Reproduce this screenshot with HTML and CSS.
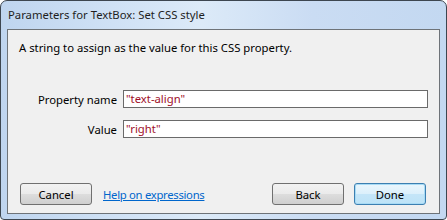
FILE: index.html
```html
<!DOCTYPE html>
<html>
<head>
<meta charset="utf-8">
<link rel="stylesheet" href="styles.css">
</head>
<body>
<div class="window">
  <div class="titlebar">Parameters for TextBox: Set CSS style</div>
  <div class="client">
    <p class="desc">A string to assign as the value for this CSS property.</p>
    <div class="form">
      <label class="label">Property name</label>
      <div class="input">"text-align"</div>
      <label class="label">Value</label>
      <div class="input">"right"</div>
    </div>
    <div class="buttons">
      <button class="btn">Cancel</button>
      <a class="link" href="#">Help on expressions</a>
      <span class="spacer"></span>
      <button class="btn">Back</button>
      <button class="btn btn-default">Done</button>
    </div>
  </div>
</div>
</body>
</html>
```

FILE: styles.css
```css
html, body {
  margin: 0;
  padding: 0;
  background: #ffffff;
}
.window {
  width: 447px;
  height: 220px;
  box-sizing: border-box;
  border: 1px solid #3d4650;
  border-radius: 7px 7px 4px 4px;
  background: linear-gradient(90deg, #bfd5ef 0%, #cfe1f5 25%, #dceaf8 45%, #cadcf3 70%, #c3d8f1 100%);
  display: flex;
  flex-direction: column;
  font-family: "Noto Sans", sans-serif;
  font-size: 11.3px;
  color: #000;
  overflow: hidden;
}
.titlebar {
  height: 28px;
  line-height: 28px;
  padding-left: 7px;
  color: #1e1e1e;
}
.client {
  margin: 0 6px 5px 6px;
  flex: 1;
  background: #f0f0f0;
  border: 1px solid #6e7378;
  display: flex;
  flex-direction: column;
}
.desc {
  margin: 10px 0 0 11px;
  line-height: 16px;
}
.form {
  display: grid;
  grid-template-columns: 109px 1fr;
  column-gap: 6px;
  row-gap: 12px;
  margin: 34px 11px 0 0;
  align-items: center;
}
.label {
  text-align: right;
}
.input {
  height: 18px;
  box-sizing: border-box;
  border: 1px solid #6a6a6a;
  background: #fff;
  color: #a0102a;
  line-height: 16px;
  padding-left: 2px;
}
.buttons {
  margin-top: auto;
  margin-bottom: 8px;
  display: flex;
  align-items: center;
  padding: 0 13px 0 12px;
}
.btn {
  width: 72px;
  height: 22px;
  box-sizing: border-box;
  border: 1px solid #707070;
  border-radius: 3px;
  background: linear-gradient(180deg, #f2f2f2 0%, #ebebeb 48%, #dddddd 52%, #cfcfcf 100%);
  font-family: "Noto Sans", sans-serif;
  font-size: 11.3px;
  color: #000;
  padding: 0;
}
.btn + .btn {
  margin-left: 10px;
}
.btn-default {
  border-color: #3c7fb1;
  box-shadow: inset 0 0 0 1px #a8dbf5;
  background: linear-gradient(180deg, #eaf6fd 0%, #dcf0fb 48%, #c4e5f8 52%, #bde3f7 100%);
}
.link {
  margin-left: 11px;
  color: #0066cc;
  text-decoration: underline;
  letter-spacing: -0.3px;
}
.spacer {
  flex: 1;
}
```
